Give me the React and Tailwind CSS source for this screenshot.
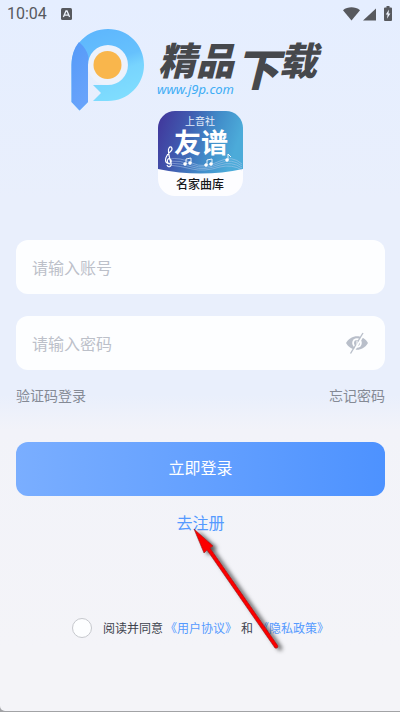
import React from "react";

function StatusBar() {
  return (
    <header className="flex h-7 items-center justify-between pr-[7px] pl-[7px] text-[#57595e]">
      <div className="flex items-center gap-3.5">
        <span className="font-[Roboto,sans-serif] text-base leading-7">10:04</span>
        <svg className="h-3 w-[11px]" viewBox="0 0 11 12" aria-hidden="true">
          <rect width="11" height="12" rx="1.5" fill="#57595e" />
          <path d="M2.4 9 5 3h1l2.6 6M3.6 7.1h3.8" fill="none" stroke="#eef3fc" strokeWidth="1.3" />
        </svg>
      </div>
      <svg className="h-4 w-[50px]" viewBox="0 0 50 16" fill="#57595e" aria-hidden="true">
        <path d="M0 4.2C4.8.4 12.2.4 17 4.2L8.500 14.600Z" />
        <path d="M20 14.500 33 2.500V14.500Z" />
        <path d="M43.500 0h3v1.500h1.500q1 0 1 1v11.500q0 1-1 1h-6q-1 0-1-1V2.500q0-1 1-1h1.500Z" />
        <path d="M46 3.500 42.800 8.600h1.800L44 12.800l3.400-5.400h-1.900Z" fill="#eef3fc" />
      </svg>
    </header>
  );
}

function SiteLogo() {
  return (
    <div className="flex h-[83px] items-start pt-px pl-[71px]">
      <svg className="h-[82px] w-[74px] shrink-0" viewBox="0 0 74 82" aria-hidden="true">
        <defs>
          <linearGradient id="ring" x1="0" y1="0" x2="0.3" y2="1">
            <stop offset="0" stopColor="#5cb4fd" />
            <stop offset="0.5" stopColor="#66c1fd" />
            <stop offset="0.65" stopColor="#78d4fe" />
            <stop offset="1" stopColor="#80defe" />
          </linearGradient>
          <linearGradient id="stem" x1="0" y1="0" x2="0.3" y2="1">
            <stop offset="0" stopColor="#559af8" />
            <stop offset="1" stopColor="#68a3fb" />
          </linearGradient>
        </defs>
        <circle cx="36.500" cy="36" r="20" fill="#edf2fc" />
        <path d="M0.500 36C.5 16 16.500 0 37 0S73 16 73 36 57 72 37 72H22L30 64 22 56H37A20 20 0 1 0 17 36V73L8.500 81.500.5 73Z" fill="url(#ring)" />
        <path d="M.5 36Q.5 22 8 13Q16 20 17.500 28Q17 32 17 36V73L8.500 81.500.5 73Z" fill="url(#stem)" />
        <circle cx="36.500" cy="36" r="14" fill="#f9b64c" />
      </svg>
      <div className="flex items-start pt-2 pl-3 font-['Noto_Sans_CJK_SC',sans-serif] text-[38px] leading-[44px] font-black text-[#46484c] italic">
        <div className="flex w-[78px] flex-col">
          <span className="pl-px">精品</span>
          <a href="#site" className="font-['Noto_Sans',sans-serif] text-[13px] leading-4 font-normal text-[#40adf5]">www.j9p.com</a>
        </div>
        <span className="text-[44px] leading-[60px]">下</span>
        <span>载</span>
      </div>
    </div>
  );
}

function AppIcon() {
  return (
    <svg className="mx-auto h-[85px] w-[85px]" viewBox="0 0 85 85" role="img" aria-label="友谱">
      <defs>
        <linearGradient id="tile" x1="0" y1="0" x2="1" y2="0.25">
          <stop offset="0" stopColor="#41349a" />
          <stop offset="0.35" stopColor="#4058ae" />
          <stop offset="0.7" stopColor="#418cc9" />
          <stop offset="1" stopColor="#4cabd9" />
        </linearGradient>
        <clipPath id="tile-shape"><rect width="85" height="85" rx="17" /></clipPath>
      </defs>
      <g clipPath="url(#tile-shape)">
        <rect width="85" height="85" fill="#fdfdff" />
        <path d="M0 0H85V58Q43 67 0 58Z" fill="url(#tile)" />
        <g fill="none" stroke="#b9cdee" strokeWidth="0.7" opacity="0.7">
          <path d="M11 48Q22 46 34 52T62 50Q74 44 84 53" />
          <path d="M11 50Q22 49 34 54T62 52Q74 47 84 55" />
          <path d="M11 52Q22 52 34 56T62 54Q74 50 84 57" />
          <path d="M11 54Q22 55 34 58T62 56Q74 53 84 59" />
        </g>
        <path d="M12 53C8 53 9 46 12 48S12 54 9 52 8 44 12 41 13 34 11 37 12 48 13 52 10 57 9 54" fill="none" stroke="#fff" strokeWidth="1.200" />
        <g fill="#fff" stroke="#fff" strokeWidth="0.9">
          <path d="M28 53V48L33 47V52M49 54V49L54 48V53M70 49V43L73 46" fill="none" />
          <circle cx="27" cy="53" r="1.300" /><circle cx="32" cy="52" r="1.300" />
          <circle cx="48" cy="54" r="1.300" /><circle cx="53" cy="53" r="1.300" /><circle cx="69" cy="49" r="1.300" />
        </g>
        <g textAnchor="middle" className="font-['Noto_Sans_CJK_SC',sans-serif]">
          <text x="42" y="14" fontSize="10" fontWeight="400" fill="#e5edfa">上音社</text>
          <text x="43" y="42" fontSize="27" fontWeight="700" fill="#fff">友谱</text>
          <text x="42" y="78" fontSize="12" fontWeight="500" fill="#17181c">名家曲库</text>
        </g>
      </g>
    </svg>
  );
}

function EyeOff() {
  return (
    <svg className="h-[22px] w-[22px]" viewBox="0 0 22 22" aria-hidden="true">
      <path d="M0 11C5 2 17 2 22 11 17 20 5 20 0 11Z" fill="#b9bfca" />
      <circle cx="11" cy="11" r="4.800" fill="#fdfeff" />
      <circle cx="11" cy="11" r="3" fill="#b9bfca" />
      <path d="M18.500 1 6 22" stroke="#fdfeff" strokeWidth="2" />
      <path d="M17 1 4.500 21.500" stroke="#b9bfca" strokeWidth="1.400" />
      <path d="M11 8.500v5" stroke="#fdfeff" strokeWidth="1" />
    </svg>
  );
}

function Arrow() {
  return (
    <svg className="pointer-events-none absolute top-1/2 left-1/2 h-[140px] w-[110px] overflow-visible" viewBox="0 0 110 140" aria-hidden="true">
      <defs>
        <filter id="shadow" x="-30%" y="-30%" width="160%" height="160%">
          <feDropShadow dx="4" dy="2" stdDeviation="2" floodColor="#000" floodOpacity="0.65" />
        </filter>
      </defs>
      <g filter="url(#shadow)" fill="#fb0505" stroke="#7d1010" strokeWidth="0.5">
        <path d="M-6 7 13 24 10 26 78 124Q78 127 75 126L7 28 4 31Z" />
      </g>
    </svg>
  );
}

export default function App() {
  return (
    <div className="flex min-h-screen flex-col bg-[#a2a3a6] pb-px font-['Noto_Sans_CJK_SC',sans-serif]">
      <div className="flex-1 rounded-bl-[5px] bg-[#f4f4f8] bg-linear-[180deg,#e5eeff_0px,#e9effc_200px,#e9effc_395px,#f2f3f9_430px,#f4f4f8_650px]">
        <StatusBar />
        <SiteLogo />
        <main className="pr-[15px] pl-4">
          <AppIcon />
          <form className="pt-11" onSubmit={(e) => e.preventDefault()}>
            <input type="text" aria-label="账号" placeholder="请输入账号" className="block h-[54px] w-full rounded-xl bg-[#fdfeff] px-4 text-base text-gray-700 outline-none placeholder:text-[#bcc0c9]" />
            <div className="mt-[22px] flex h-[54px] items-center rounded-xl bg-[#fdfeff] pr-[17px] pl-4">
              <input type="password" aria-label="密码" placeholder="请输入密码" className="h-full min-w-0 flex-1 bg-transparent text-base text-gray-700 outline-none placeholder:text-[#bcc0c9]" />
              <button type="button" aria-label="显示密码"><EyeOff /></button>
            </div>
            <div className="mt-[15px] flex justify-between text-sm leading-5 text-[#858a95]">
              <a href="#code">验证码登录</a>
              <a href="#forgot">忘记密码</a>
            </div>
            <button type="submit" className="mt-[37px] block h-[54px] w-full rounded-xl bg-linear-to-r from-[#7aaeff] to-[#4d92ff] pb-1 text-base text-white">立即登录</button>
            <div className="mt-3.5 flex justify-center">
              <div className="relative">
                <a href="#register" className="text-base leading-6 text-[#559aff]">去注册</a>
                <Arrow />
              </div>
            </div>
            <div className="mt-[84px] flex items-center justify-center text-xs leading-5 text-[#3d424d]">
              <input id="agree" type="checkbox" className="mr-[11px] size-5 appearance-none rounded-full border border-[#c6c8cd] bg-[#fdfeff] checked:bg-[#559aff]" />
              <label htmlFor="agree">阅读并同意</label>
              <a href="#terms" className="ml-0.5 text-[#559aff]">《用户协议》</a>
              <span className="mx-1">和</span>
              <a href="#privacy" className="text-[#559aff]">《隐私政策》</a>
            </div>
          </form>
        </main>
      </div>
    </div>
  );
}
